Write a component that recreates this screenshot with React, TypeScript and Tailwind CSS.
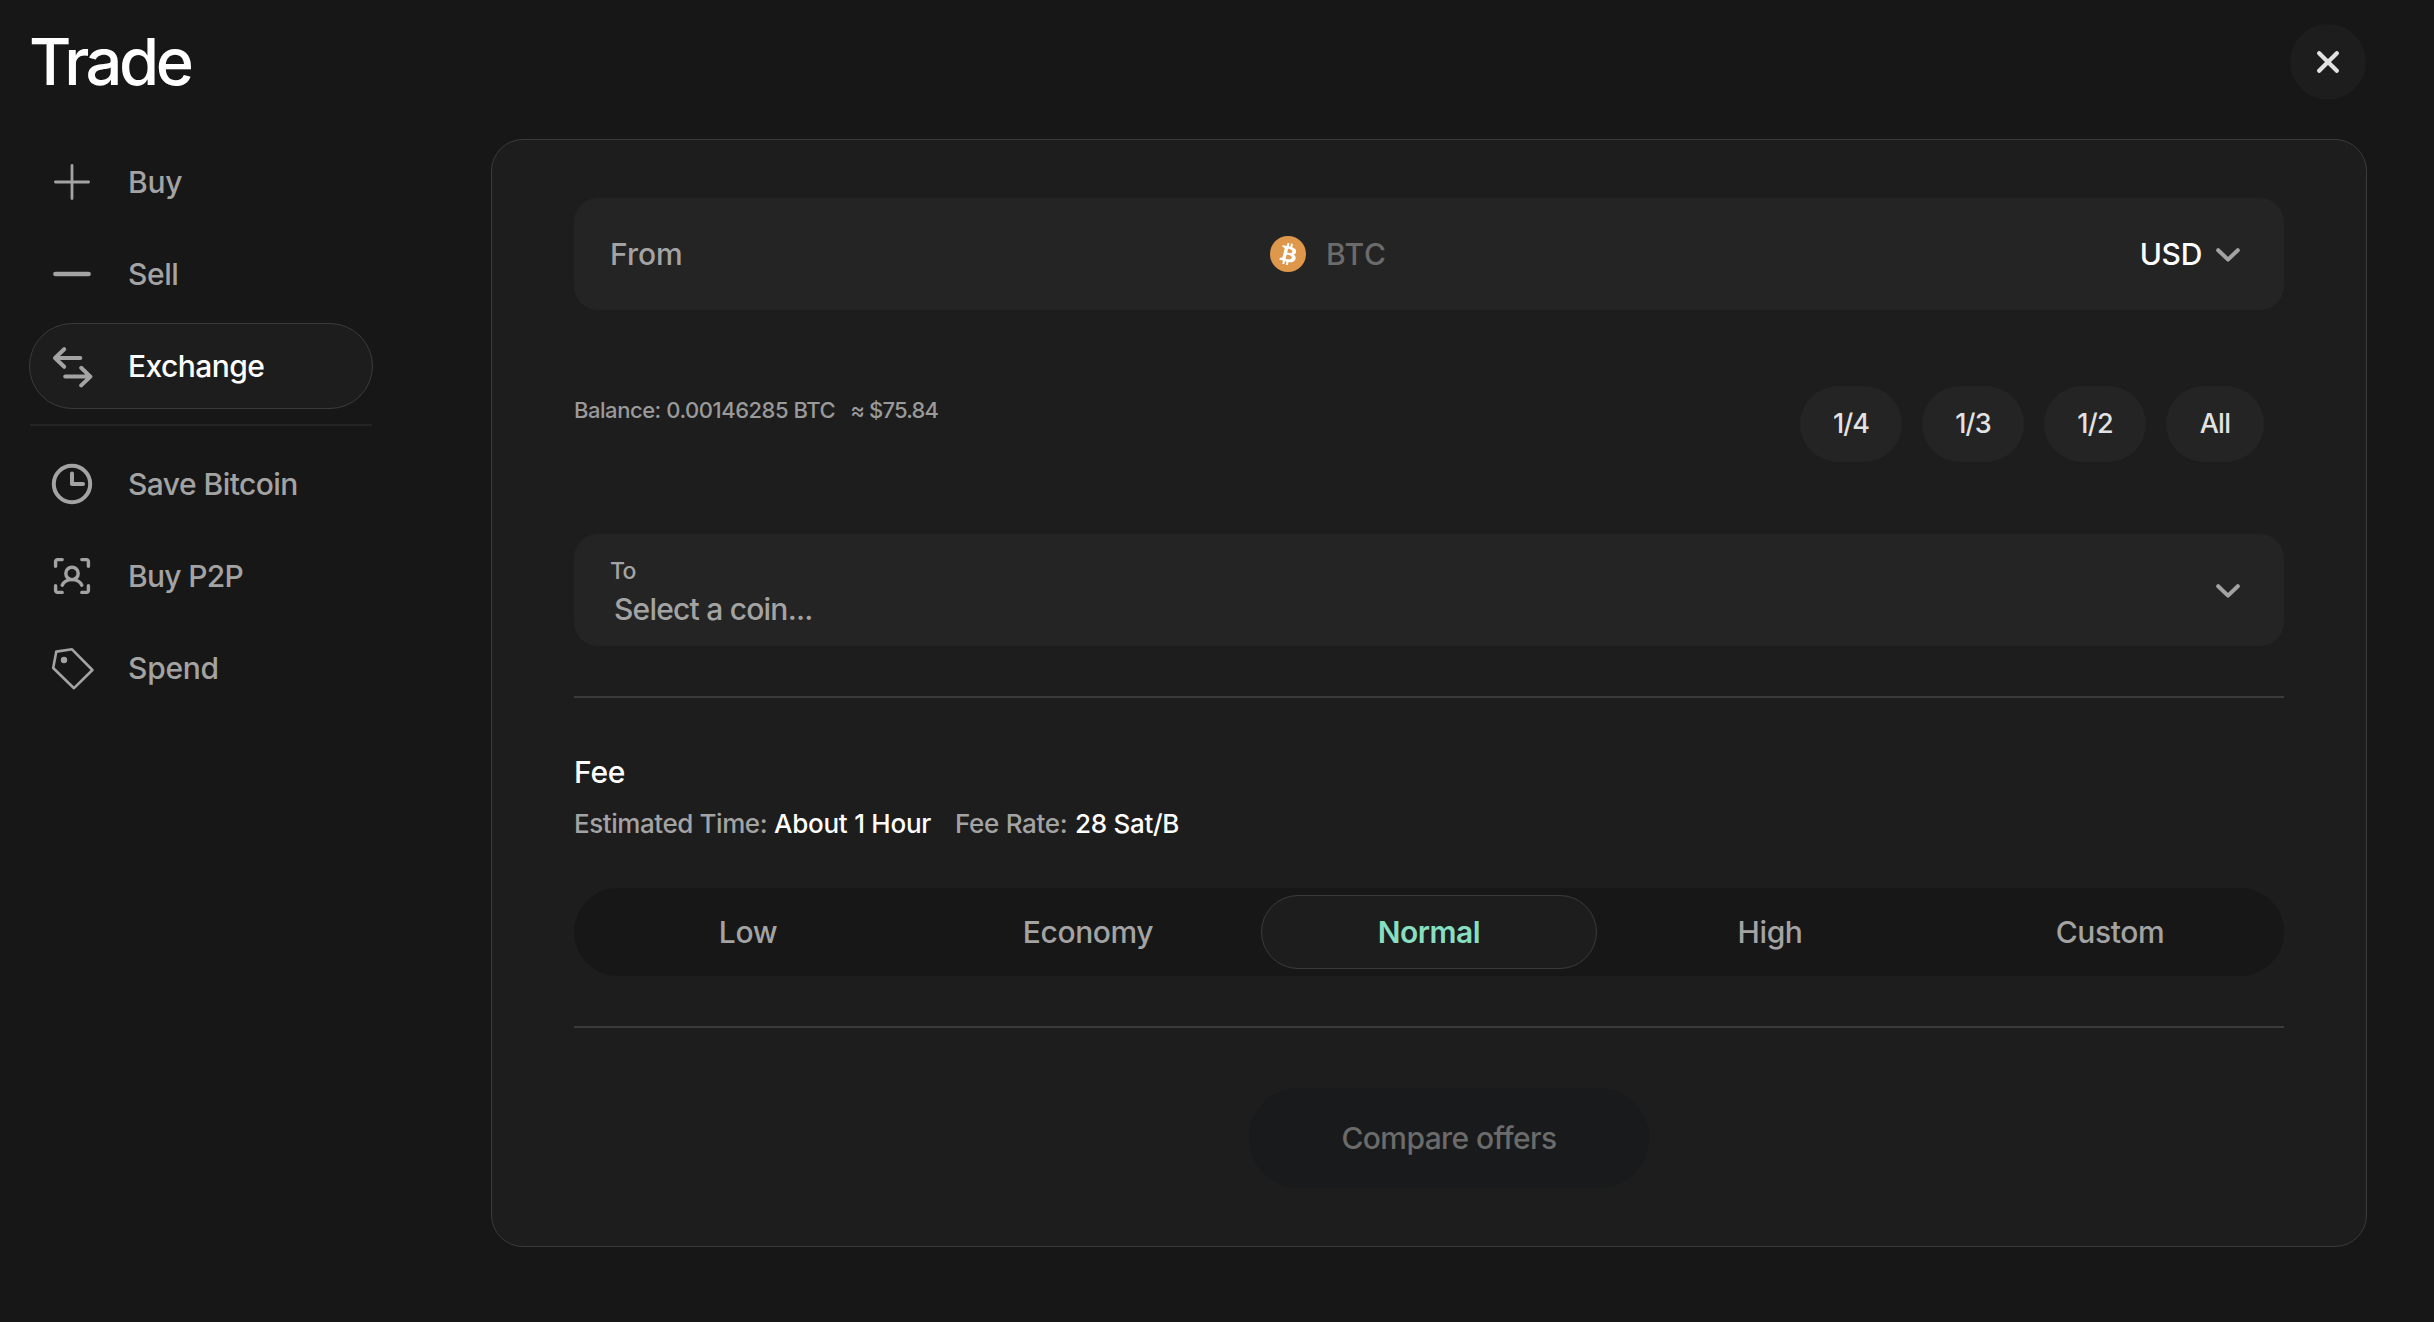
import type { ReactNode } from "react";

type NavEntry = {
  label: string;
  tracking: string;
  icon: ReactNode;
  active?: boolean;
};

function NavIcon({ children, width = 4 }: { children: ReactNode; width?: number }) {
  return (
    <svg
      viewBox="0 0 44 44"
      className="h-11 w-11 shrink-0 text-[#a3a3a3]"
      fill="none"
      stroke="currentColor"
      strokeWidth={width}
      strokeLinecap="round"
      strokeLinejoin="round"
    >
      {children}
    </svg>
  );
}

const primaryNav: NavEntry[] = [
  {
    label: "Buy",
    tracking: "tracking-[-0.2px]",
    icon: (
      <NavIcon width={2.8}>
        <path d="M22 5.4v33.2M5.4 22h33.2" />
      </NavIcon>
    ),
  },
  {
    label: "Sell",
    tracking: "tracking-[-0.4px]",
    icon: (
      <NavIcon width={4.6}>
        <path d="M5.4 22h33.2" />
      </NavIcon>
    ),
  },
  {
    label: "Exchange",
    tracking: "tracking-[-0.55px]",
    active: true,
    icon: (
      <NavIcon>
        <path d="M30.3 14H5.2M14.2 5.2L5 14l9.2 8.8" />
        <path d="M15.2 32.6h25.1M31.2 23.8l9.2 8.8-9.2 8.8" />
      </NavIcon>
    ),
  },
];

const secondaryNav: NavEntry[] = [
  {
    label: "Save Bitcoin",
    tracking: "tracking-[-0.55px]",
    icon: (
      <NavIcon>
        <circle cx="22" cy="22" r="18.2" />
        <path d="M22 11.5V22h11" />
      </NavIcon>
    ),
  },
  {
    label: "Buy P2P",
    tracking: "tracking-[-0.7px]",
    icon: (
      <NavIcon width={3.4}>
        <path d="M5.6 12.2V7.4a1.8 1.8 0 0 1 1.8-1.8h4.8M31.8 5.6h4.8a1.8 1.8 0 0 1 1.8 1.8v4.8M38.4 31.8v4.8a1.8 1.8 0 0 1-1.8 1.8h-4.8M12.2 38.4H7.4a1.8 1.8 0 0 1-1.8-1.8v-4.8" />
        <circle cx="22" cy="19.4" r="6.2" />
        <path d="M12.2 31.2C13.8 27.6 17.4 25.6 22 25.6s8.200 2 9.800 5.600" />
      </NavIcon>
    ),
  },
  {
    label: "Spend",
    tracking: "tracking-[-0.25px]",
    icon: (
      <NavIcon width={2.6}>
        <path d="M6.300 5.600L22 3.300 42.400 24 24 42.200 3.200 22z" />
        <circle cx="14" cy="14" r="3.2" fill="currentColor" stroke="none" />
      </NavIcon>
    ),
  },
];

function NavItem({ label, tracking, icon, active }: NavEntry) {
  return (
    <button
      className={
        active
          ? "flex h-[86px] w-[344px] items-center gap-[34px] rounded-[43px] border border-[#3b3b3b] bg-[#1d1d1d] px-5 text-white"
          : "flex h-[86px] w-[344px] items-center gap-[34px] rounded-[43px] border border-transparent px-5 text-[#a3a3a3]"
      }
    >
      {icon}
      <span className={`${tracking} text-[30px] leading-none`}>{label}</span>
    </button>
  );
}

function Chevron() {
  return (
    <svg
      viewBox="0 0 24 14"
      className="block h-3.5 w-6 shrink-0"
      fill="none"
      stroke="#a3a3a3"
      strokeWidth="4"
      strokeLinecap="round"
      strokeLinejoin="round"
    >
      <path d="M2.200 2.200L12 11.600l9.800-9.400" />
    </svg>
  );
}

function BitcoinLogo() {
  return (
    <svg viewBox="0 0 32 32" className="h-9 w-9 shrink-0">
      <circle cx="16" cy="16" r="16" fill="#dd984c" />
      <path
        fill="#fff"
        d="M23.189 14.020c.314-2.096-1.283-3.223-3.465-3.975l.708-2.840-1.728-.430-.690 2.765c-.454-.114-.920-.220-1.385-.326l.695-2.783L15.596 6l-.708 2.839c-.376-.086-.746-.170-1.104-.260l.002-.009-2.384-.595-.460 1.846s1.283.294 1.256.312c.700.175.826.638.805 1.006l-.806 3.235c.048.012.110.030.180.057l-.183-.045-1.130 4.532c-.086.212-.303.531-.793.410.018.025-1.256-.313-1.256-.313l-.858 1.978 2.250.561c.418.105.828.215 1.231.318l-.715 2.872 1.727.430.708-2.840c.472.127.930.245 1.378.357l-.706 2.828 1.728.430.715-2.866c2.948.558 5.164.333 6.097-2.333.752-2.146-.037-3.385-1.588-4.192 1.130-.260 1.980-1.003 2.207-2.538zm-3.950 5.538c-.533 2.147-4.148.986-5.320.695l.950-3.805c1.172.293 4.929.872 4.370 3.110zm.535-5.569c-.487 1.953-3.495.960-4.470.717l.860-3.450c.975.243 4.118.696 3.610 2.733z"
      />
    </svg>
  );
}

const fractions = [
  { label: "1/4", box: "w-[102px]", tracking: "tracking-[-0.9px]" },
  { label: "1/3", box: "w-[102px]", tracking: "tracking-[-0.9px]" },
  { label: "1/2", box: "w-[102px]", tracking: "tracking-[-0.7px]" },
  { label: "All", box: "w-[98px]", tracking: "tracking-[-0.7px]" },
];

const feeLevels = ["Low", "Economy", "Normal", "High", "Custom"];

export default function App() {
  return (
    <div className="flex h-[1322px] w-[2434px] flex-col overflow-hidden bg-[#171717] font-['Inter',sans-serif] font-[450] text-[#a3a3a3]">
      <header className="flex h-[124px] shrink-0 items-center justify-between pr-[68px] pl-[29px]">
        <h1 className="pb-px text-[65px] leading-none font-medium tracking-[-3.5px] text-white">Trade</h1>
        <button aria-label="Close" className="flex h-[76px] w-[76px] items-center justify-center rounded-full bg-[#1d1d1d]">
          <svg viewBox="0 0 22 22" className="h-[22px] w-[22px]" stroke="#e2e2e2" strokeWidth="4.2" strokeLinecap="round">
            <path d="M2.200 2.200l17.600 17.600M19.800 2.200L2.200 19.800" />
          </svg>
        </button>
      </header>

      <div className="flex">
        <nav className="mt-[15px] ml-[29px] flex w-[344px] shrink-0 flex-col">
          <div className="flex flex-col gap-1.5">
            {primaryNav.map((item) => (
              <NavItem key={item.label} {...item} />
            ))}
          </div>
          <div className="mx-px my-[15px] h-0.5 bg-[#242424]" />
          <div className="flex flex-col gap-1.5">
            {secondaryNav.map((item) => (
              <NavItem key={item.label} {...item} />
            ))}
          </div>
        </nav>

        <main className="mt-[15px] ml-[118px] h-[1108px] w-[1876px] rounded-[32px] border border-[#3b3b3b] bg-[#1d1d1d] px-[82px] pt-[58px]">
          <section className="flex h-28 items-center rounded-3xl bg-[#242424] pr-11 pl-9">
            <span className="w-[660px] text-[30px] leading-none tracking-[0px]">From</span>
            <BitcoinLogo />
            <span className="ml-5 text-[30px] leading-none tracking-[0.6px] text-[#6b6b6b]">BTC</span>
            <button className="ml-auto flex items-center gap-3.5 text-white">
              <span className="text-[30px] leading-none tracking-[-0.3px]">USD</span>
              <span className="pt-0.5">
                <Chevron />
              </span>
            </button>
          </section>

          <section className="mt-[76px] flex h-[76px] items-start justify-between pr-5">
            <p className="mt-[13px] flex gap-[15px] text-[22px] leading-[22px] text-[#9a9a9a]">
              <span className="tracking-[-0.46px]">Balance: 0.00146285 BTC</span>
              <span className="tracking-[-0.85px]">≈ $75.84</span>
            </p>
            <div className="flex gap-5">
              {fractions.map((f) => (
                <button
                  key={f.label}
                  className={`${f.box} ${f.tracking} flex h-[76px] items-center justify-center rounded-[38px] bg-[#242424] pb-0.5 text-[27px] leading-none text-[#e2e2e2]`}
                >
                  {f.label}
                </button>
              ))}
            </div>
          </section>

          <section className="mt-[72px] flex h-28 items-center justify-between rounded-3xl bg-[#242424] pr-11 pl-9">
            <div className="flex flex-col">
              <span className="pt-[3px] text-[23px] leading-[23px] tracking-[-0.8px]">To</span>
              <span className="mt-[11px] pl-1 text-[30px] leading-[30px] tracking-[-0.78px]">Select a coin...</span>
            </div>
            <div className="pt-0.5">
              <Chevron />
            </div>
          </section>

          <div className="mt-[50px] h-0.5 bg-[#3b3b3b]" />

          <section className="mt-[59px]">
            <h2 className="text-[30px] leading-[30px] tracking-[-0.2px] text-white">Fee</h2>
            <p className="mt-6 flex text-[26px] leading-[26px]">
              <span className="w-[200px] tracking-[-0.43px]">Estimated Time:</span>
              <span className="w-[181px] tracking-[-0.25px] text-white">About 1 Hour</span>
              <span className="w-[120px] tracking-[-0.3px]">Fee Rate:</span>
              <span className="tracking-[-0.3px] text-white">28 Sat/B</span>
            </p>
          </section>

          <div className="mt-[51px] flex h-[88px] items-center gap-1.5 rounded-[44px] bg-[#171717] px-[7px]">
            {feeLevels.map((level) => (
              <button
                key={level}
                className={
                  level === "Normal"
                    ? "flex h-[74px] flex-1 items-center justify-center rounded-[37px] border border-[#3b3b3b] bg-[#1d1d1d] text-[30px] leading-none font-semibold tracking-[-0.5px] text-[#86dfc0]"
                    : "flex h-[74px] flex-1 items-center justify-center text-[30px] leading-none tracking-[-0.4px]"
                }
              >
                {level}
              </button>
            ))}
          </div>

          <div className="mt-[50px] h-0.5 bg-[#3b3b3b]" />

          <div className="mt-[60px] flex justify-center pl-10">
            <button className="h-[100px] w-[400px] rounded-[50px] bg-[#191a1b] text-[30px] leading-none tracking-[-0.6px] text-[#6b6b6b]">
              Compare offers
            </button>
          </div>
        </main>
      </div>
    </div>
  );
}
